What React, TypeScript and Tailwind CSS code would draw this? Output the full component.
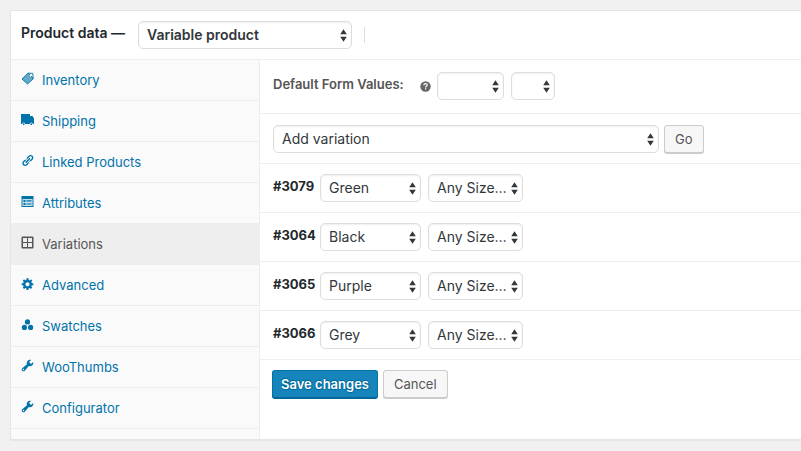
import type { ReactNode, SelectHTMLAttributes } from "react";

const LINK =
  "M17.74 2.76c1.68 1.69 1.68 4.41 0 6.1l-1.53 1.52c-1.12 1.12-2.7 1.47-4.14 1.09l2.62-2.61.76-.77.76-.76c.84-.84.84-2.2 0-3.04-.84-.85-2.2-.85-3.04 0l-.77.76-3.38 3.38c-.37-1.44-.02-3.02 1.1-4.14l1.52-1.53c1.69-1.68 4.42-1.68 6.1 0zM8.59 13.43l5.34-5.34c.42-.42.42-1.1 0-1.52-.44-.43-1.13-.39-1.53 0l-5.33 5.34c-.42.42-.42 1.1 0 1.52.44.43 1.13.39 1.52 0zm-.76 2.29l4.14-4.15c.38 1.44.03 3.02-1.09 4.14l-1.52 1.53c-1.69 1.68-4.41 1.68-6.1 0-1.68-1.68-1.68-4.42 0-6.1l1.53-1.52c1.12-1.12 2.7-1.47 4.14-1.1l-4.14 4.15c-.85.84-.85 2.2 0 3.05.84.84 2.2.84 3.04 0z";
const GEAR =
  "M18 12h-2.18c-.17.7-.44 1.35-.81 1.93l1.54 1.54-2.1 2.1-1.54-1.54c-.58.36-1.23.63-1.91.79V19H8v-2.18c-.68-.16-1.33-.43-1.91-.79l-1.54 1.54-2.12-2.12 1.54-1.54c-.36-.58-.63-1.23-.79-1.91H1V9.03h2.17c.16-.7.44-1.35.8-1.94L2.43 5.55l2.1-2.1 1.54 1.54c.58-.37 1.24-.64 1.93-.81V2h3v2.18c.68.16 1.33.43 1.91.79l1.54-1.54 2.12 2.12-1.54 1.54c.36.59.64 1.24.8 1.94H18V12zm-8.5 1.5c1.66 0 3-1.34 3-3s-1.34-3-3-3-3 1.34-3 3 1.34 3 3 3z";
const WRENCH =
  "M16.68 9.77c-1.34 1.34-3.3 1.67-4.95.99l-5.41 6.52c-.99.99-2.59.99-3.58 0s-.99-2.59 0-3.57l6.52-5.42c-.68-1.65-.35-3.61.99-4.95 1.28-1.28 3.12-1.62 4.72-1.06l-2.89 2.89 2.82 2.82 2.86-2.87c.53 1.58.18 3.39-1.08 4.65zM3.81 16.21c.4.39 1.04.39 1.43 0 .4-.4.4-1.04 0-1.43-.39-.4-1.03-.4-1.43 0-.39.39-.39 1.03 0 1.43z";

function Icon({ box, children }: { box: string; children: ReactNode }) {
  return (
    <svg viewBox={box} className="mb-1 size-[13px] shrink-0" fill="currentColor" aria-hidden="true">
      {children}
    </svg>
  );
}

const tabs: { label: string; icon: ReactNode; active?: boolean }[] = [
  {
    label: "Inventory",
    icon: (
      <Icon box="0 0 13 13">
        <path d="M1 7 7 1.2l5.5 5.3L6.5 12z" opacity=".6" />
        <path
          d="M1 7 7 1.2l3 2.6 2.3 2.9L6.6 12zM7 1.2l4.8.1.3 5"
          fill="none"
          stroke="currentColor"
          strokeWidth=".9"
        />
        <circle cx="9.6" cy="3.6" r=".9" fill="#fafafa" />
      </Icon>
    ),
  },
  {
    label: "Shipping",
    icon: (
      <Icon box="0 0 13 13">
        <path d="M0 1h9v2h2.5L13 5.5V11h-1.2a1.5 1.5 0 0 0-3 0H4.2a1.5 1.5 0 0 0-3 0H0z" />
        <circle cx="2.7" cy="11.2" r=".9" />
        <circle cx="10.3" cy="11.2" r=".9" />
      </Icon>
    ),
  },
  {
    label: "Linked Products",
    icon: (
      <Icon box="0 0 20 20">
        <path d={LINK} />
      </Icon>
    ),
  },
  {
    label: "Attributes",
    icon: (
      <Icon box="0 0 13 13">
        <path
          fillRule="evenodd"
          d="M.5 1h12v11H.5zM1.5 4v7h10V4zM2.5 5h2v2h-2zM5.5 5.3h5v1.2h-5zM2.5 8h2v2h-2zM5.5 8.4h5v1.2h-5z"
        />
        <path d="M1.5 4h10v7h-10z" opacity=".2" />
      </Icon>
    ),
  },
  {
    label: "Variations",
    active: true,
    icon: (
      <Icon box="0 0 13 13">
        <path
          fillRule="evenodd"
          d="M.5 1.5a1 1 0 0 1 1-1h10a1 1 0 0 1 1 1v10a1 1 0 0 1-1 1h-10a1 1 0 0 1-1-1zM2 2v4h4V2zM7 2v4h4V2zM2 7v4h4V7zM7 7v4h4V7z"
        />
      </Icon>
    ),
  },
  {
    label: "Advanced",
    icon: (
      <Icon box="0 0 19 19">
        <path d={GEAR} />
      </Icon>
    ),
  },
  {
    label: "Swatches",
    icon: (
      <Icon box="0 0 13 13">
        <circle cx="6.5" cy="3.9" r="2.6" />
        <circle cx="3.4" cy="9.4" r="2.6" />
        <circle cx="9.6" cy="9.4" r="2.6" />
      </Icon>
    ),
  },
  {
    label: "WooThumbs",
    icon: (
      <Icon box="1 1 18 18">
        <path d={WRENCH} />
      </Icon>
    ),
  },
  {
    label: "Configurator",
    icon: (
      <Icon box="1 1 18 18">
        <path d={WRENCH} />
      </Icon>
    ),
  },
];

const variations = [
  { id: "3079", colour: "Green" },
  { id: "3064", colour: "Black" },
  { id: "3065", colour: "Purple" },
  { id: "3066", colour: "Grey" },
];

type SelectProps = SelectHTMLAttributes<HTMLSelectElement> & { width: string; option?: string };

function Select({ width, option = "", className = "", ...rest }: SelectProps) {
  return (
    <span className={`relative flex ${width}`}>
      <select
        className={`h-7 w-full appearance-none rounded-[5px] border border-[#ddd] bg-white pl-2 text-sm leading-5 text-[#32373c] shadow-[inset_0_1px_2px_rgba(0,0,0,0.07)] ${className}`}
        {...rest}
      >
        <option>{option}</option>
      </select>
      <svg
        viewBox="0 0 7 13"
        className="pointer-events-none absolute top-2 right-[5px] h-[13px] w-[7px]"
        fill="#32373c"
        aria-hidden="true"
      >
        <path d="M3.5 .3 6.8 5.2H.2zM3.5 12.7.2 7.8h6.6z" />
      </svg>
    </span>
  );
}

function Button({ primary = false, children }: { primary?: boolean; children: ReactNode }) {
  const tone = primary
    ? "px-2 border-[#0073aa] border-b-[#006799] bg-[#1585bb] font-semibold text-white shadow-[0_1px_0_#006799] [text-shadow:0_-1px_1px_#006799,1px_0_1px_#006799,0_1px_1px_#006799]"
    : "px-2.5 border-[#ccc] bg-[#f7f7f7] text-[#555] shadow-[0_1px_0_#ccc]";
  return (
    <button type="button" className={`h-7 rounded-[3px] border text-[13px] ${tone}`}>
      {children}
    </button>
  );
}

export default function App() {
  return (
    <div className="min-h-screen bg-[#f1f1f1] pt-2.5 pb-3 pl-2.5 font-['Inter','Liberation_Sans',sans-serif] text-[13px] leading-5 text-[#23282d]">
      <section className="border border-r-0 border-[#e5e5e5] bg-white shadow-[0_1px_1px_rgba(0,0,0,0.04)]">
        <header className="flex h-[49px] items-center gap-3 border-b border-[#eee] pl-2.5">
          <label htmlFor="product-type" className="mb-1 w-[105px] text-sm font-semibold whitespace-nowrap">
            Product data —
          </label>
          <Select id="product-type" width="w-[214px]" option="Variable product" className="font-semibold" />
          <span className="h-4 w-px bg-[#ddd]" />
        </header>
        <div className="flex">
          <nav className="w-[249px] shrink-0 border-r border-[#eee] bg-[#fafafa] pb-2.5">
            <ul>
              {tabs.map((tab) => (
                <li key={tab.label}>
                  <a
                    href="#"
                    className={`flex h-[41px] items-center gap-2 border-b border-[#eee] pl-2.5 ${
                      tab.active ? "bg-[#eee] text-[#555]" : "text-[#0073aa]"
                    }`}
                  >
                    {tab.icon}
                    {tab.label}
                  </a>
                </li>
              ))}
            </ul>
          </nav>
          <main className="min-w-0 grow">
            <div className="flex h-[54px] items-center border-b border-[#eee] pb-px pl-[13px]">
              <span className="mb-1 w-[147px] font-semibold text-[#555]">Default Form Values:</span>
              <svg viewBox="0 0 11 11" className="mr-1.5 size-[11px]" role="img" aria-label="Help">
                <circle cx="5.5" cy="5.5" r="5.2" fill="#666" />
                <path
                  d="M3.8 4.3c0-2.2 3.4-2.2 3.4-.2 0 1.2-1.6 1.2-1.6 2.3M5.6 7.3v1.3"
                  fill="none"
                  stroke="#fff"
                  strokeWidth="1.2"
                />
              </svg>
              <div className="flex gap-[7px]">
                <Select aria-label="Default colour" width="w-[67px]" />
                <Select aria-label="Default size" width="w-[44px]" />
              </div>
            </div>
            <div className="flex h-[50px] items-center gap-[5px] border-b border-[#eee] pl-[13px]">
              <Select aria-label="Variation action" width="w-[386px]" option="Add variation" />
              <Button>Go</Button>
            </div>
            {variations.map((v) => (
              <div key={v.id} className="flex h-[49px] items-center gap-1 border-b border-[#eee] pl-[13px]">
                <strong className="mb-1 w-[43px] font-bold">#{v.id}</strong>
                <div className="flex gap-[7px]">
                  <Select aria-label={`Colour of #${v.id}`} width="w-[101px]" option={v.colour} />
                  <Select aria-label={`Size of #${v.id}`} width="w-[95px]" option="Any Size…" />
                </div>
              </div>
            ))}
            <div className="flex gap-[5px] px-3 pt-2.5">
              <Button primary>Save changes</Button>
              <Button>Cancel</Button>
            </div>
          </main>
        </div>
      </section>
    </div>
  );
}
